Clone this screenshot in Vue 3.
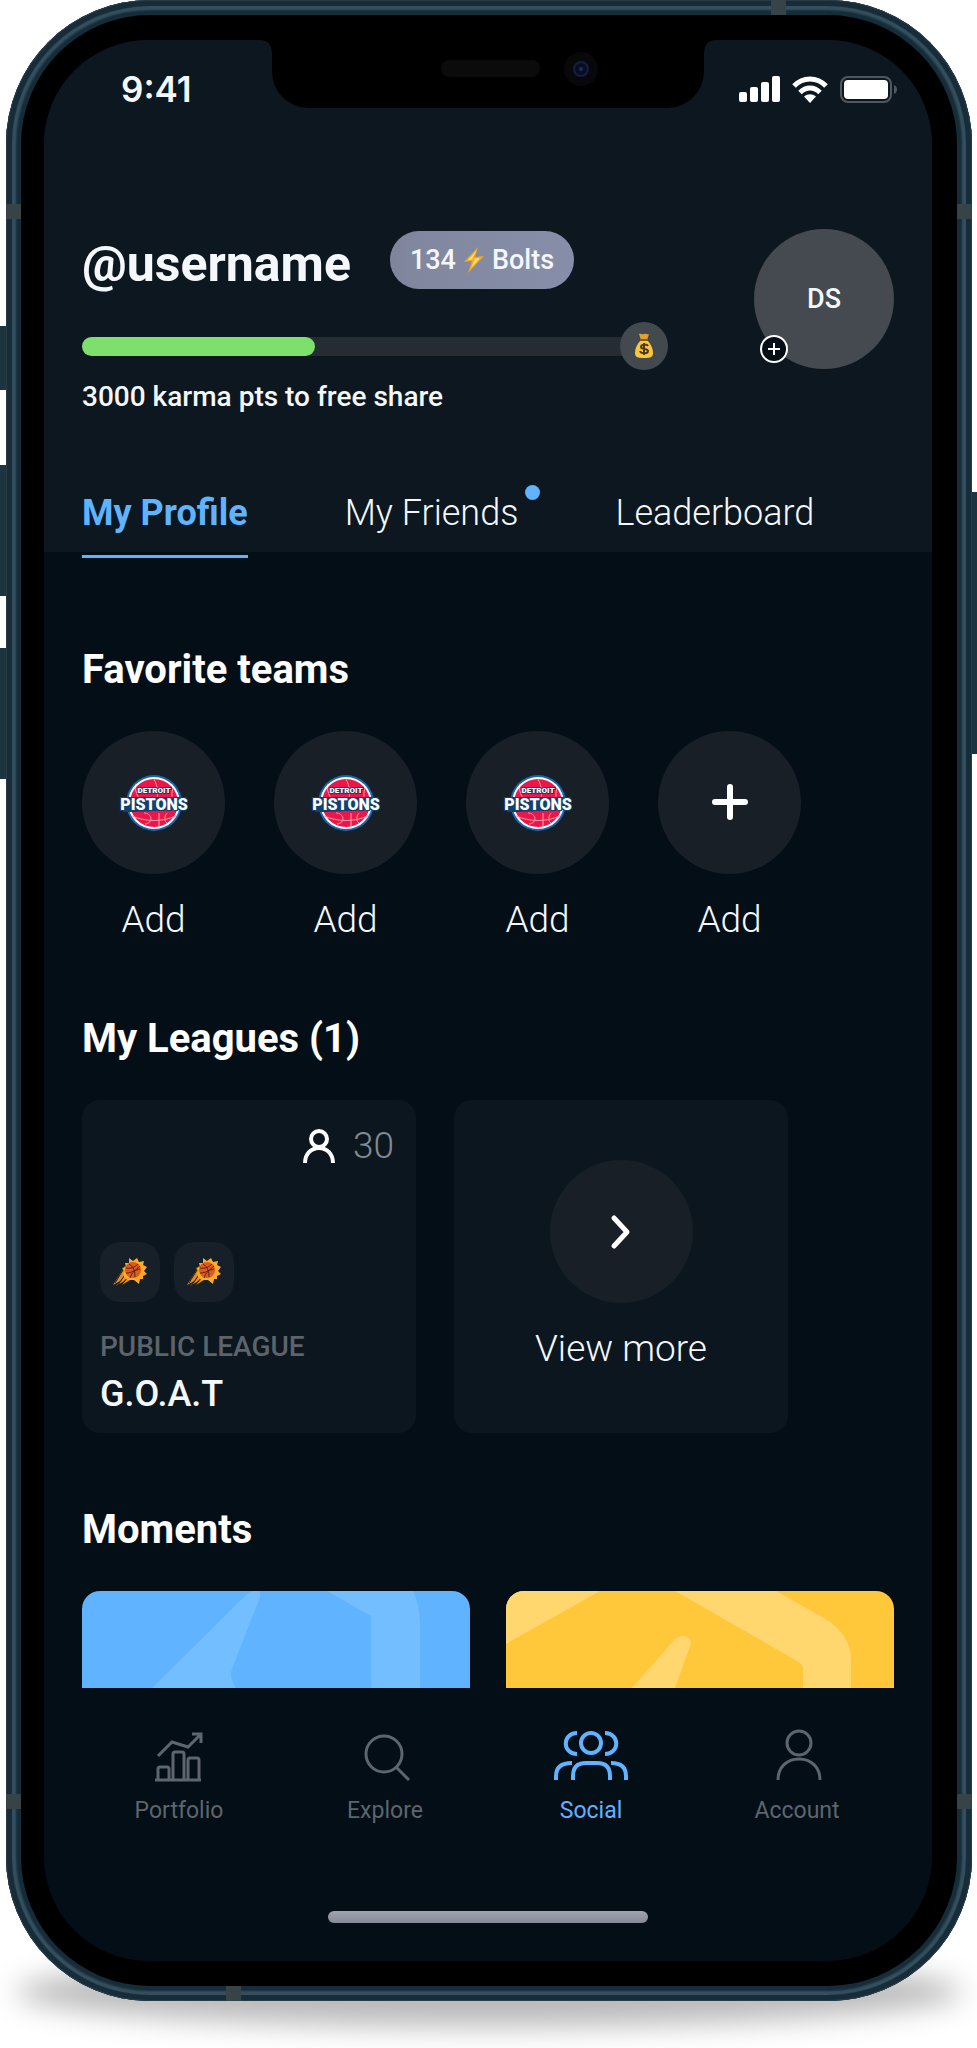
<template>
    <div class="page">
        <div class="phone">
            <span class="side-button mute"></span>
            <span class="side-button volume-up"></span>
            <span class="side-button volume-down"></span>
            <span class="side-button power"></span>
            <span v-for="a in antene" :key="a" class="antenna" :class="a"></span>

            <div class="bezel">
                <div class="screen">
                    <svg class="notch" width="456" height="68" viewBox="0 0 456 68">
                        <path d="M0 0h456c-8 0-12 5-12 14v16c0 22-16 38-38 38H50C28 68 12 52 12 30V14C12 5 8 0 0 0z" fill="#000" />
                        <rect x="181" y="20" width="99" height="17" rx="8" fill="#0b0b0c" />
                        <circle cx="321" cy="29" r="17" fill="#07080a" />
                        <circle cx="321" cy="29" r="7" fill="#0a0d22" stroke="#142040" stroke-width="2" />
                        <circle cx="321" cy="29" r="2" fill="#232d5a" />
                    </svg>

                    <div class="status-bar">
                        <span class="time">9:41</span>
                        <div class="status-icons">
                            <svg width="41" height="26" viewBox="0 0 41 26" fill="#fff">
                                <rect x="0" y="16" width="8" height="10" rx="2" />
                                <rect x="11" y="11" width="8" height="15" rx="2" />
                                <rect x="22" y="6" width="8" height="20" rx="2" />
                                <rect x="33" y="0" width="8" height="26" rx="2" />
                            </svg>
                            <svg width="36" height="27" viewBox="0 0 36 27" fill="none" stroke="#fff" stroke-width="5">
                                <path d="M2 10C11 .500 25 .500 34 10" />
                                <path d="M8 16.500c6-6 14-6 20 0" />
                                <path d="M12 20.500c4-3 8-3 12 0L18 27z" fill="#fff" stroke="none" />
                            </svg>
                            <svg width="58" height="27" viewBox="0 0 58 27">
                                <rect x="1" y="1" width="50" height="25" rx="7" fill="none" stroke="#50585f" stroke-width="2" />
                                <rect x="4" y="4" width="44" height="19" rx="4" fill="#fff" />
                                <path d="M54 9c4 1 4 8 0 9z" fill="#50585f" />
                            </svg>
                        </div>
                    </div>

                    <header class="header">
                        <div class="user">
                            <div class="user-info">
                                <div class="name-row">
                                    <h1>@username</h1>
                                    <span class="bolts">
                                        134
                                        <svg width="20" height="26" viewBox="0 0 20 26">
                                            <path d="M14 0L0 15l8-1L4 26 20 9l-9 1z" fill="#f5a81c" />
                                            <path d="M13 3L4 13l7-1-4 9 9-10-8 1z" fill="#ffe27a" />
                                        </svg>
                                        Bolts
                                    </span>
                                </div>
                                <div class="karma">
                                    <div class="karma-track" role="progressbar" :aria-valuenow="karma" aria-valuemin="0" aria-valuemax="100" aria-label="Karma">
                                        <div class="karma-fill" :style="{ width: karma + '%' }"></div>
                                    </div>
                                    <span class="karma-coin">
                                        <svg width="20" height="26" viewBox="0 0 20 26">
                                            <path d="M5 1c2-1 3 1 5 0s3 1 5 0l-2 6H7z" fill="#e0a32a" />
                                            <path d="M7 7h6c4 4 6 8 6 13 0 4-2 5-9 5s-9-1-9-5c0-5 2-9 6-13z" fill="#fbc63b" />
                                            <path d="M6 7h8" stroke="#8d5a14" stroke-width="2" />
                                            <path d="M14 13c-1-2-7-2-7 1s7 1 7 4-7 3-8 0M10 10v12" fill="none" stroke="#4b3a18" stroke-width="2" />
                                        </svg>
                                    </span>
                                </div>
                                <p class="karma-text">3000 karma pts to free share</p>
                            </div>
                            <button class="avatar" type="button">
                                DS
                                <svg class="avatar-plus" width="30" height="30" viewBox="0 0 30 30" fill="#030e17" stroke="#fff" stroke-width="2">
                                    <circle cx="15" cy="15" r="13" />
                                    <path d="M15 9v12M9 15h12" />
                                </svg>
                            </button>
                        </div>

                        <div class="tabs" role="tablist">
                            <button
                                v-for="tab in tabovi"
                                :key="tab.naziv"
                                type="button"
                                role="tab"
                                class="tab"
                                :class="{ active: tab.naziv === aktivniTab }"
                                :aria-selected="tab.naziv === aktivniTab"
                                @click="aktivniTab = tab.naziv"
                            >
                                {{ tab.naziv }}
                                <span v-if="tab.novo" class="dot"></span>
                            </button>
                        </div>
                    </header>

                    <main class="content">
                        <section>
                            <h2>Favorite teams</h2>
                            <div class="teams">
                                <button v-for="tim in timovi" :key="tim.id" type="button" class="team">
                                    <span class="circle">
                                        <svg v-if="tim.logo" width="72" height="58" viewBox="-3 0 72 58">
                                            <circle cx="33" cy="30" r="28" fill="#1467b3" />
                                            <circle cx="33" cy="30" r="26" fill="#fff" />
                                            <circle cx="33" cy="30" r="24" fill="#ec1748" />
                                            <g fill="none" stroke="#ff9db3" stroke-width="1">
                                                <path d="M33 6c4 8 4 14 3 20M14 15c2 8 4 11 7 15M52 15c-2 5-1 9 0 14" />
                                                <path d="M11 43c14 6 30 6 44 0M38 40v14M46 40c-3 4-3 8 0 10M23 40c8 0 10 10 1 11" />
                                            </g>
                                            <path d="M1 24h64l1 13H56l-44 2H2z" fill="#12406f" />
                                            <text x="33" y="20" class="logo-small">DETROIT</text>
                                            <text x="33" y="37" class="logo-big">PISTONS</text>
                                        </svg>
                                        <svg v-else width="36" height="36" viewBox="0 0 36 36" stroke="#fff" stroke-width="6" stroke-linecap="round">
                                            <path d="M18 3v30M3 18h30" />
                                        </svg>
                                    </span>
                                    Add
                                </button>
                            </div>
                        </section>

                        <section>
                            <h2>My Leagues (1)</h2>
                            <div class="leagues">
                                <a href="#" class="league">
                                    <span class="members">
                                        <svg width="32" height="34" viewBox="0 0 32 34" fill="none" stroke="#fff" stroke-width="4">
                                            <circle cx="16" cy="10" r="8" />
                                            <path d="M2 34c0-9 6-15 14-15s14 6 14 15" />
                                        </svg>
                                        30
                                    </span>
                                    <span class="tiles">
                                        <span v-for="n in 2" :key="n" class="tile">
                                            <svg width="34" height="28" viewBox="0 0 34 28">
                                                <path d="M12 8L0 27l9-5-6 6 10-6-4 5 13-8z" fill="#e98a1a" />
                                                <path d="M10 12L2 25M13 15L5 27M16 18L9 26" stroke="#171f28" stroke-width="1" />
                                                <path d="M16 0l4 3 4-3 2 4 5-1-1 4 4 2-3 4 3 3-4 2 0 3-3 0-1 5-5-4-6 0-4-3-1-4 2-2-3-3 4-1-1-4 4 0z" fill="#fbae25" />
                                                <circle cx="20" cy="12" r="8" fill="#e4581d" />
                                                <path d="M13 10c5 1 9-1 12-4M13 15c6 0 10-3 14-7M17 20c2-6 5-8 10-9M16 6c5 3 6 8 6 13" fill="none" stroke="#4c2a1c" stroke-width="1" />
                                            </svg>
                                        </span>
                                    </span>
                                    <span class="league-type">PUBLIC LEAGUE</span>
                                    <span class="league-name">G.O.A.T</span>
                                </a>
                                <a href="#" class="league more">
                                    <span class="circle">
                                        <svg width="24" height="36" viewBox="0 0 24 36" fill="none" stroke="#fff" stroke-width="5" stroke-linecap="round" stroke-linejoin="round">
                                            <path d="M5 4l13 14L5 32" />
                                        </svg>
                                    </span>
                                    View more
                                </a>
                            </div>
                        </section>

                        <section>
                            <h2>Moments</h2>
                            <div class="moments">
                                <a href="#" class="moment blue" aria-label="Moment 1">
                                    <svg viewBox="0 0 388 97" preserveAspectRatio="xMidYMin slice" fill="#73beff">
                                        <path d="M70 97L163 5q5-5 9-5h6v6l-28 72q-3 9 4 19z" />
                                        <path d="M245 0l44 25v72h49V34q0-20-7-34z" />
                                    </svg>
                                </a>
                                <a href="#" class="moment yellow" aria-label="Moment 2">
                                    <svg viewBox="0 0 388 97" preserveAspectRatio="xMidYMin slice" fill="#ffd76e">
                                        <path d="M0 0h94L0 53z" />
                                        <path d="M169 0l122 70q6 3 6 8v19h48V69q0-26-27-42L270 0z" />
                                        <path d="M126 97l43-49q6-5 12-2 6 3 3 9l-15 42z" />
                                    </svg>
                                </a>
                            </div>
                        </section>
                    </main>

                    <nav class="nav">
                        <a href="#" class="nav-item">
                            <svg width="48" height="54" viewBox="0 0 48 54" fill="none" stroke="currentColor" stroke-width="3">
                                <path d="M3 28l14-14 16 5L46 6M37 6h9v9" />
                                <path d="M0 52h46M3 52V41q0-2 2-2h7q2 0 2 2v11M18 52V26q0-2 2-2h7q2 0 2 2v26M33 52V32q0-2 2-2h7q2 0 2 2v20" />
                            </svg>
                            Portfolio
                        </a>
                        <a href="#" class="nav-item">
                            <svg width="54" height="54" viewBox="0 0 54 54" fill="none" stroke="currentColor" stroke-width="3">
                                <circle cx="26" cy="26" r="18" />
                                <path d="M38 39l13 13" />
                            </svg>
                            Explore
                        </a>
                        <a href="#" class="nav-item active">
                            <svg width="74" height="54" viewBox="0 0 74 54" fill="none" stroke="currentColor" stroke-width="4">
                                <circle cx="37" cy="15" r="10" />
                                <path d="M23 5C8 5 8 26 23 26M51 5c15 0 15 21 0 21" />
                                <path d="M19 52v-4q0-13 13-13h11q13 0 13 13v4M2 52v-4q0-13 16-13M57 35q15 0 15 13v4" />
                            </svg>
                            Social
                        </a>
                        <a href="#" class="nav-item">
                            <svg width="54" height="54" viewBox="0 0 54 54" fill="none" stroke="currentColor" stroke-width="3">
                                <circle cx="29" cy="15" r="12" />
                                <path d="M8 52c0-13 9-21 21-21s21 8 21 21" />
                            </svg>
                            Account
                        </a>
                    </nav>
                    <div class="home-indicator"></div>
                </div>
            </div>
        </div>
    </div>
</template>

<script setup>

    import { ref } from 'vue';

    const karma = ref(43);

    const aktivniTab = ref("My Profile");

    const tabovi = [
        { naziv: "My Profile", novo: false },
        { naziv: "My Friends", novo: true },
        { naziv: "Leaderboard", novo: false }
    ];

    const timovi = ref([
        { id: 1, logo: true },
        { id: 2, logo: true },
        { id: 3, logo: true },
        { id: 4, logo: false }
    ]);

    const antene = ["top", "left-top", "right-top", "left-bottom", "right-bottom", "bottom"];

</script>

<style>
    body {
        margin: 0;
        background-color: white;
    }
</style>

<style scoped>

    * {
        box-sizing: border-box;
    }

    .page {
        padding: 0 5px 47px 6px;
        overflow: hidden;
        font-family: Roboto, "Liberation Sans", sans-serif;
        color: #f4f7fc;
    }

    h1,
    h2,
    p {
        margin: 0;
    }

    button {
        padding: 0;
        border: none;
        background: none;
        color: inherit;
        font-family: inherit;
        cursor: pointer;
    }

    a {
        color: inherit;
        text-decoration: none;
    }

    svg {
        display: block;
        flex: none;
    }

    /* telefon */
    .phone {
        position: relative;
        padding: 15px;
        border-radius: 144px;
        background-color: #162c38;
        box-shadow: inset 0 0 0 1px #2a3b46, inset 0 0 1px 6px #162c38, inset 0 0 2px 10px #35505f;
    }

    .phone::before {
        content: "";
        position: absolute;
        z-index: -1;
        left: 10px;
        right: 10px;
        bottom: -26px;
        height: 70px;
        border-radius: 50%;
        background-color: rgba(0, 0, 0, 0.27);
        filter: blur(14px);
    }

    .side-button {
        position: absolute;
        left: -6px;
        width: 6px;
        background-color: #1b3440;
    }

    .mute {
        top: 326px;
        height: 64px;
    }

    .volume-up {
        top: 465px;
        height: 131px;
    }

    .volume-down {
        top: 648px;
        height: 131px;
    }

    .power {
        top: 492px;
        left: auto;
        right: -5px;
        width: 5px;
        height: 262px;
    }

    .antenna {
        position: absolute;
        width: 15px;
        height: 15px;
        background-color: #364347;
    }

    .top {
        top: 0;
        right: 186px;
    }

    .bottom {
        bottom: 0;
        left: 220px;
    }

    .left-top {
        top: 204px;
        left: 0;
    }

    .right-top {
        top: 204px;
        right: 0;
    }

    .left-bottom {
        bottom: 192px;
        left: 0;
    }

    .right-bottom {
        bottom: 192px;
        right: 0;
    }

    .bezel {
        padding: 25px 25px 25px 23px;
        border-radius: 129px;
        background-color: black;
    }

    .screen {
        position: relative;
        overflow: hidden;
        border-radius: 104px;
        background-color: #030e17;
    }

    .notch {
        position: absolute;
        top: 0;
        left: 50%;
        transform: translateX(-50%);
    }

    .status-bar {
        display: flex;
        justify-content: space-between;
        align-items: center;
        padding: 27px 34px 50px 77px;
        background-color: #0c171f;
    }

    .time {
        font-family: Inter, sans-serif;
        font-size: 35px;
        font-weight: 600;
        line-height: 44px;
    }

    .status-icons {
        display: flex;
        gap: 12px;
    }

    /* zaglavlje */
    .header {
        display: flex;
        flex-direction: column;
        padding: 68px 38px 0;
        background-color: #0c171f;
    }

    .user {
        display: flex;
        justify-content: space-between;
        align-items: flex-start;
        gap: 86px;
    }

    .user-info {
        flex: 1;
        padding-top: 2px;
    }

    .name-row {
        display: flex;
        align-items: flex-start;
        gap: 39px;
    }

    h1 {
        font-size: 50px;
        font-weight: 700;
        line-height: 66px;
    }

    .bolts {
        display: flex;
        align-items: center;
        gap: 8px;
        padding: 0 20px;
        border-radius: 29px;
        background: linear-gradient(90deg, #7f869c, #878ea9);
        font-size: 27px;
        font-weight: 500;
        line-height: 58px;
    }

    .karma {
        display: flex;
        align-items: center;
        margin-top: 25px;
    }

    .karma-track {
        flex: 1;
        height: 19px;
        border-radius: 10px 0 0 10px;
        background-color: #252c34;
    }

    .karma-fill {
        height: 100%;
        min-width: 19px;
        border-radius: 10px;
        background-color: #7de06d;
    }

    .karma-coin {
        display: flex;
        justify-content: center;
        align-items: center;
        width: 48px;
        height: 48px;
        margin-left: -4px;
        border-radius: 50%;
        background-color: #42494f;
    }

    .karma-text {
        margin-top: 10px;
        font-size: 28px;
        font-weight: 500;
        line-height: 34px;
    }

    .avatar {
        position: relative;
        width: 140px;
        height: 140px;
        border-radius: 50%;
        background-color: #444a4f;
        font-size: 27px;
        font-weight: 500;
    }

    .avatar-plus {
        position: absolute;
        left: 5px;
        bottom: 5px;
    }

    .tabs {
        display: flex;
        gap: 97px;
        margin-top: 77px;
        margin-bottom: -6px;
    }

    .tab {
        position: relative;
        padding-bottom: 20px;
        border-bottom: 3px solid transparent;
        font-size: 36px;
        font-weight: 300;
        line-height: 44px;
        white-space: nowrap;
    }

    .tab.active {
        border-color: #5fb3ff;
        color: #5fb3ff;
        font-weight: 700;
    }

    .dot {
        position: absolute;
        top: -6px;
        right: -22px;
        width: 15px;
        height: 15px;
        border-radius: 50%;
        background-color: #5fb3ff;
    }

    /* sadrzaj */
    .content {
        display: flex;
        flex-direction: column;
        gap: 73px;
        padding: 94px 38px 0;
    }

    h2 {
        margin-bottom: 37px;
        color: white;
        font-size: 40px;
        font-weight: 700;
        line-height: 48px;
    }

    .teams {
        display: flex;
        gap: 49px;
    }

    .team {
        display: flex;
        flex-direction: column;
        align-items: center;
        gap: 24px;
        font-size: 37px;
        font-weight: 300;
        line-height: 44px;
    }

    .circle {
        display: flex;
        justify-content: center;
        align-items: center;
        width: 143px;
        height: 143px;
        border-radius: 50%;
        background-color: #181f27;
    }

    .team svg {
        margin-bottom: 2px;
    }

    .logo-small,
    .logo-big {
        fill: white;
        stroke: #12406f;
        stroke-width: 2px;
        paint-order: stroke;
        text-anchor: middle;
        font-weight: 900;
    }

    .logo-small {
        font-size: 8px;
    }

    .logo-big {
        font-size: 16px;
    }

    .leagues {
        display: flex;
        gap: 38px;
    }

    .league {
        display: flex;
        flex-direction: column;
        width: 334px;
        min-height: 333px;
        padding: 24px 18px 17px;
        border-radius: 18px;
        background-color: #0c161e;
    }

    .members {
        display: flex;
        justify-content: flex-end;
        align-items: center;
        gap: 18px;
        padding-right: 4px;
        color: #838a91;
        font-size: 37px;
        font-weight: 300;
        line-height: 44px;
    }

    .tiles {
        display: flex;
        gap: 14px;
        margin-top: auto;
    }

    .tile {
        display: flex;
        justify-content: center;
        align-items: center;
        width: 60px;
        height: 60px;
        border-radius: 20px;
        background-color: #171f28;
    }

    .league-type {
        margin-top: 28px;
        color: #5d636b;
        font-size: 28px;
        font-weight: 500;
        line-height: 34px;
    }

    .league-name {
        margin-top: 8px;
        font-size: 36px;
        font-weight: 500;
        line-height: 44px;
    }

    .more {
        justify-content: center;
        align-items: center;
        gap: 24px;
        padding-bottom: 26px;
        font-size: 37px;
        font-weight: 300;
        line-height: 44px;
    }

    .moments {
        display: flex;
        gap: 36px;
    }

    .moment {
        flex: 1;
        height: 97px;
        overflow: hidden;
        border-radius: 18px 18px 0 0;
    }

    .moment svg {
        width: 100%;
        height: 100%;
    }

    .blue {
        background-color: #5fb3ff;
    }

    .yellow {
        background-color: #ffc83a;
    }

    /* donja navigacija */
    .nav {
        display: grid;
        grid-template-columns: repeat(4, 1fr);
        padding: 40px 32px 0;
    }

    .nav-item {
        display: flex;
        flex-direction: column;
        align-items: center;
        gap: 14px;
        color: #5e656c;
        font-size: 23px;
        font-weight: 400;
        line-height: 30px;
    }

    .nav-item.active {
        color: #5fb3ff;
    }

    .home-indicator {
        width: 36%;
        height: 12px;
        margin: 85px auto 38px;
        border-radius: 6px;
        background: linear-gradient(#a0a4b0, #858a96);
    }

</style>
